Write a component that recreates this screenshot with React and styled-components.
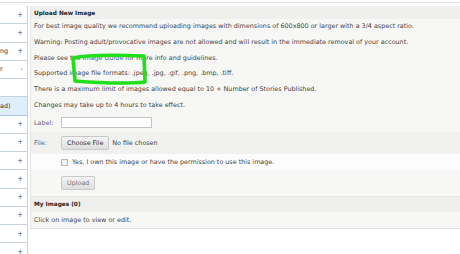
import React from "react";
import styled, { createGlobalStyle } from "styled-components";

const GlobalStyle = createGlobalStyle`
  html, body {
    margin: 0;
    padding: 0;
    background: #ffffff;
    overflow: hidden;
  }
  body {
    font-family: "DejaVu Sans", Verdana, sans-serif;
    color: #333;
  }
`;

const Page = styled.div`
  display: flex;
  align-items: flex-start;
  gap: 2px;
  width: 460px;
  height: 254px;
  border-top: 1px solid #e2e2e2;
  margin-top: 2px;
  box-sizing: border-box;
`;

const Sidebar = styled.ul`
  list-style: none;
  margin: 3px 0 0;
  padding: 0;
  width: 28px;
  flex: none;
`;

const NavItem = styled.li`
  display: flex;
  align-items: center;
  justify-content: space-between;
  height: 18.25px;
  box-sizing: border-box;
  padding-right: 4px;
  border-bottom: 1px solid ${(p) => (p.active ? "#a9c6e2" : "#c6d2de")};
  border-right: 1px solid #c6d2de;
  background: ${(p) => (p.active ? "#dfeefa" : "#fff")};
  font-size: 6.4px;
  color: #333;
  white-space: nowrap;
  overflow: hidden;
`;

const Sign = styled.span`
  font-size: 7px;
  color: #555;
`;

const Panel = styled.div`
  position: relative;
  flex: 1;
  margin-top: 3px;
  background: #f7f7f6;
  border-left: 1px solid #e4e4e4;
  border-bottom: 1px solid #e0e0e0;
`;

const Header = styled.div`
  background: #efefee;
  padding: 4px 3px 3px;
  font-size: 5.8px;
  font-weight: bold;
  color: #222;
`;

const Text = styled.p`
  margin: 0;
  padding: 0 3px;
  height: 15.8px;
  line-height: 15.8px;
  font-size: 6.4px;
  color: #444;
  white-space: nowrap;
`;

const Link = styled.a`
  color: #3a6aa8;
  text-decoration: none;
`;

const FormRow = styled.div`
  display: grid;
  grid-template-columns: 30px 1fr;
  align-items: center;
  height: ${(p) => p.h || 17}px;
  background: ${(p) => p.bg || "transparent"};
  font-size: 6.4px;
  color: #444;
`;

const Label = styled.span`
  padding-left: 3px;
  color: #667;
`;

const Input = styled.div`
  width: 91px;
  height: 11px;
  border: 1px solid #c4c4c4;
  background: #fff;
  box-sizing: border-box;
`;

const FileField = styled.div`
  display: flex;
  align-items: center;
  gap: 3px;
`;

const Button = styled.span`
  display: inline-block;
  padding: 2px 5px;
  border: 1px solid #c9c9c9;
  border-radius: 2px;
  background: linear-gradient(#f4f4f4, #dedede);
  color: ${(p) => (p.muted ? "#777" : "#333")};
  font-size: 6.4px;
`;

const Check = styled.span`
  display: inline-block;
  width: 5px;
  height: 5px;
  border: 1px solid #bbb;
  background: #f3f3f3;
  margin-right: 4px;
  vertical-align: middle;
`;

const SubHeader = styled.div`
  background: #efefee;
  padding: 0 3px;
  height: 15px;
  line-height: 15px;
  font-size: 5.8px;
  font-weight: bold;
  color: #222;
  border-top: 1px solid #e6e6e6;
`;

const Note = styled(Text)`
  height: 16px;
  line-height: 16px;
`;

const Marker = styled.svg`
  position: absolute;
  left: 40px;
  top: 44px;
  pointer-events: none;
`;

const navItems = [
  { text: "", sign: "+" },
  { text: "", sign: "+" },
  { text: "ng", sign: "+" },
  { text: "r", sign: "-" },
  { text: "", sign: "" },
  { text: "ad)", sign: "", active: true },
  { text: "", sign: "+" },
  { text: "", sign: "+" },
  { text: "", sign: "+" },
  { text: "", sign: "+" },
  { text: "", sign: "+" },
  { text: "", sign: "+" },
  { text: "", sign: "+" },
  { text: "", sign: "+" },
];

export default function App() {
  return (
    <>
      <GlobalStyle />
      <Page>
        <Sidebar>
          {navItems.map((item, i) => (
            <NavItem key={i} active={item.active}>
              <span>{item.text}</span>
              <Sign>{item.sign}</Sign>
            </NavItem>
          ))}
        </Sidebar>
        <Panel>
          <Header>Upload New Image</Header>
          <Text>
            For best image quality we recommend uploading images with dimensions of 600x800 or larger with a 3/4 aspect ratio.
          </Text>
          <Text>
            Warning: Posting adult/provocative images are not allowed and will result in the immediate removal of your account.
          </Text>
          <Text>
            Please see the <Link href="#">Image Guide</Link> for more info and guidelines.
          </Text>
          <Text>Supported image file formats: .jpeg, .jpg, .gif, .png, .bmp, .tiff.</Text>
          <Text>There is a maximum limit of images allowed equal to 10 + Number of Stories Published.</Text>
          <Text>Changes may take up to 4 hours to take effect.</Text>
          <FormRow h={18}>
            <Label>Label:</Label>
            <Input />
          </FormRow>
          <FormRow h={22} bg="#f1f1f0">
            <Label>File:</Label>
            <FileField>
              <Button>Choose File</Button>
              <span>No file chosen</span>
            </FileField>
          </FormRow>
          <FormRow h={16} bg="#fcfcfc">
            <span />
            <span>
              <Check />
              Yes, I own this image or have the permission to use this image.
            </span>
          </FormRow>
          <FormRow h={26}>
            <span />
            <span>
              <Button muted>Upload</Button>
            </span>
          </FormRow>
          <SubHeader>My Images (0)</SubHeader>
          <Note>Click on image to view or edit.</Note>
          <Marker width="80" height="40" viewBox="0 0 80 40">
            <path
              d="M2 8 C 20 4, 50 5, 73 6 L 74 32 C 55 34, 30 33, 4 31 Z"
              fill="none"
              stroke="#1fe01a"
              strokeWidth="3.6"
              strokeLinejoin="round"
            />
          </Marker>
        </Panel>
      </Page>
    </>
  );
}
